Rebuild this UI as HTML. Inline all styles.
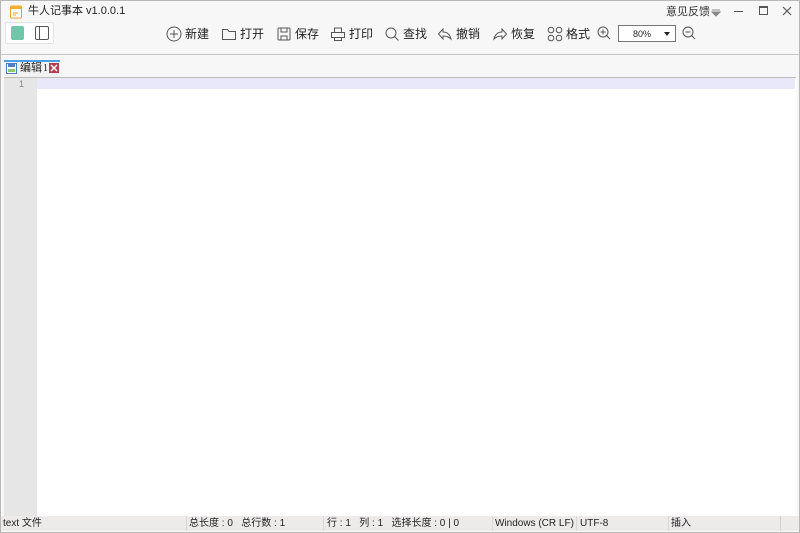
<!DOCTYPE html>
<html><head><meta charset="utf-8"><style>
*{margin:0;padding:0;box-sizing:border-box}
body{width:800px;height:533px;overflow:hidden;background:#f7f7f7;font-family:"Liberation Sans","Noto Sans CJK SC",sans-serif;font-size:12px;line-height:13px;color:#222;position:relative}
.a{position:absolute}
.frame{left:0;top:0;width:800px;height:533px;border:1px solid #b8b8b8}
.tb{top:24px;height:20px;display:flex;align-items:center;font-size:12px}
.tb svg{margin-right:3px}
.s{top:518px;font-size:10px;line-height:11px;white-space:nowrap}
.sep{top:516px;width:1px;height:15px;background:#d8d8d8}
</style></head><body>
<div class="a frame"></div>
<svg class="a" style="left:9px;top:5px" width="14" height="14" viewBox="0 0 14 14"><rect x="1.5" y="1" width="11" height="12" rx="1" fill="#fff" stroke="#f0a030"/><rect x="1.5" y="1" width="11" height="3" fill="#f5b030"/><path d="M4 8h5M4 10h3" stroke="#f0a030"/></svg>
<div class="a" style="left:28px;top:5px;font-size:11px">牛人记事本 v1.0.0.1</div>
<div class="a" style="left:666px;top:6px;font-size:11px;color:#333">意见反馈</div>
<svg class="a" style="left:711px;top:9px" width="10" height="8"><path d="M1 1h8M1 3h8L5 7z" fill="#888" stroke="#888"/></svg>
<div class="a" style="left:734px;top:11px;width:9px;height:1px;background:#555"></div>
<div class="a" style="left:759px;top:6px;width:9px;height:9px;border:1px solid #555;border-top-width:2px"></div>
<svg class="a" style="left:782px;top:6px" width="10" height="10"><path d="M1 1l8 8M9 1l-8 8" stroke="#555" stroke-width="1.2"/></svg>
<div class="a" style="left:5px;top:22px;width:49px;height:22px;background:#fff;border:1px solid #e2e2e2;border-radius:2px"></div>
<div class="a" style="left:11px;top:26px;width:13px;height:14px;background:#6fc6a8;border-radius:2px"></div>
<div class="a" style="left:35px;top:26px;width:14px;height:14px;border:1px solid #555;border-radius:2px"></div>
<div class="a" style="left:39px;top:27px;width:1px;height:12px;background:#555"></div>
<div class="a tb" style="left:166px"><svg width="16" height="16"><circle cx="8" cy="8" r="7" fill="none" stroke="#555"/><path d="M8 4v8M4 8h8" stroke="#555"/></svg>新建</div>
<div class="a tb" style="left:221px"><svg width="16" height="16"><path d="M1.5 3.5h5l1.5 2h6.5v8h-13z" fill="none" stroke="#555"/></svg>打开</div>
<div class="a tb" style="left:276px"><svg width="16" height="16"><rect x="2" y="2" width="12" height="12" rx="1" fill="none" stroke="#555"/><path d="M5 2v4h6V2M5 14v-4h6v4" fill="none" stroke="#555"/></svg>保存</div>
<div class="a tb" style="left:330px"><svg width="16" height="16"><path d="M4.5 6V2h7v4M1.5 6.5h13v5h-13zM4.5 11.5v3h7v-3" fill="none" stroke="#555"/></svg>打印</div>
<div class="a tb" style="left:384px"><svg width="16" height="16"><circle cx="7" cy="7" r="5" fill="none" stroke="#555"/><path d="M10.5 10.5l4 4" stroke="#555"/></svg>查找</div>
<div class="a tb" style="left:437px"><svg width="16" height="16"><path d="M6 3L1.5 8 6 13V10c4 0 6 1 8 3-1-4-3-7-8-7z" fill="none" stroke="#555"/></svg>撤销</div>
<div class="a tb" style="left:492px"><svg width="16" height="16"><path d="M10 3l4.5 5L10 13V10c-4 0-6 1-8 3 1-4 3-7 8-7z" fill="none" stroke="#555"/></svg>恢复</div>
<div class="a tb" style="left:547px"><svg width="16" height="16"><circle cx="4" cy="4" r="2.8" fill="none" stroke="#555"/><circle cx="12" cy="4" r="2.8" fill="none" stroke="#555"/><circle cx="4" cy="12" r="2.8" fill="none" stroke="#555"/><circle cx="12" cy="12" r="2.8" fill="none" stroke="#555"/></svg>格式</div>
<svg class="a" style="left:597px;top:26px" width="14" height="14"><circle cx="6" cy="6" r="5" fill="none" stroke="#555"/><path d="M6 3.5v5M3.5 6h5M9.5 9.5l3.5 3.5" stroke="#555"/></svg>
<div class="a" style="left:618px;top:25px;width:58px;height:17px;border:1px solid #777;background:#fff;font-size:9px;line-height:10px;padding:3px 0 0 14px">80%</div>
<svg class="a" style="left:664px;top:32px" width="6" height="4"><path d="M0 0h6L3 4z" fill="#222"/></svg>
<svg class="a" style="left:682px;top:26px" width="14" height="14"><circle cx="6" cy="6" r="5" fill="none" stroke="#555"/><path d="M3.5 6h5M9.5 9.5l3.5 3.5" stroke="#555"/></svg>
<div class="a" style="left:1px;top:54px;width:798px;height:1px;background:#c4c4c4"></div>
<div class="a" style="left:4px;top:60px;width:56px;height:17px;background:#f2f2f2;border-top:2px solid #4aa0e8"></div>
<svg class="a" style="left:6px;top:63px" width="11" height="11"><rect x=".5" y=".5" width="10" height="10" fill="#fff" stroke="#4a80c8"/><rect x="2" y="1" width="7" height="3" fill="#4a80c8"/><rect x="2" y="6" width="7" height="3" fill="#8ec86a"/></svg>
<div class="a" style="left:20px;top:62px;font-size:11px;line-height:12px">编辑</div>
<div class="a" style="left:43px;top:63px;font-size:10px;line-height:11px;font-family:'Liberation Serif',serif">1</div>
<svg class="a" style="left:49px;top:63px" width="10" height="10"><rect width="10" height="10" fill="#b04050"/><path d="M2 2l6 6M8 2l-6 6" stroke="#fff" stroke-width="1.5"/></svg>
<div class="a" style="left:4px;top:77px;width:792px;height:1px;background:#bcbcbc"></div>
<div class="a" style="left:4px;top:78px;width:792px;height:438px;background:#fff"></div>
<div class="a" style="left:4px;top:78px;width:33px;height:438px;background:#e6e6e6"></div>
<div class="a" style="left:37px;top:78px;width:758px;height:11px;background:#e8e8fa"></div>
<div class="a" style="left:19px;top:79px;font-size:9px;line-height:10px;color:#888">1</div>
<div class="a" style="left:1px;top:516px;width:798px;height:15px;background:#edeaea"></div>
<div class="a s" style="left:3px">text 文件</div>
<div class="a sep" style="left:186px"></div>
<div class="a s" style="left:189px">总长度 : 0&nbsp;&nbsp;&nbsp;总行数 : 1</div>
<div class="a sep" style="left:323px"></div>
<div class="a s" style="left:327px">行 : 1&nbsp;&nbsp;&nbsp;列 : 1&nbsp;&nbsp;&nbsp;选择长度 : 0 | 0</div>
<div class="a sep" style="left:492px"></div>
<div class="a s" style="left:495px">Windows (CR LF)</div>
<div class="a sep" style="left:576px"></div>
<div class="a s" style="left:580px">UTF-8</div>
<div class="a sep" style="left:668px"></div>
<div class="a s" style="left:671px">插入</div>
<div class="a sep" style="left:780px;background:#d0d0d0"></div>
</body></html>
